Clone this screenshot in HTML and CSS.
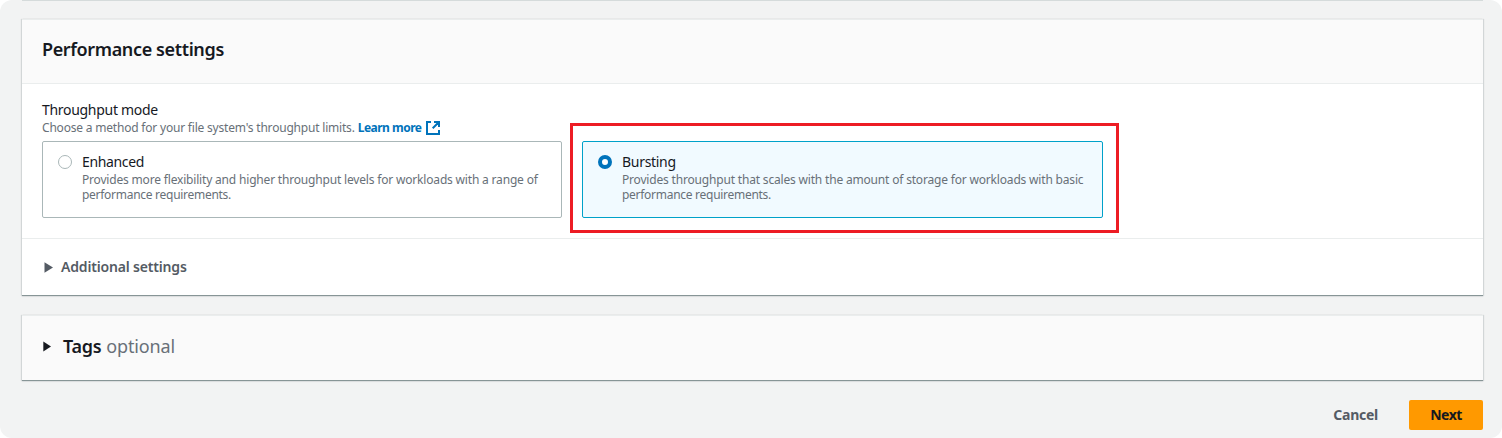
FILE: index.html
```html
<!DOCTYPE html>
<html lang="en">
<head>
<meta charset="utf-8">
<title>Performance settings</title>
<link rel="stylesheet" href="styles.css">
</head>
<body>
<main class="page">
  <div class="previous-edge"></div>
  <section class="card performance">
    <header class="card-header"><h2 class="title"><span class="t-title">Performance settings</span></h2></header>
    <div class="card-body">
      <div class="label"><span class="t-label">Throughput mode</span></div>
      <div class="hint">
        <span class="t-hint">Choose a method for your file system's throughput limits.</span>
        <a class="learn" href="#"><span class="t-learn">Learn more</span>
          <svg class="external" viewBox="0 0 14 14"><path d="M5 1H1v12h12V9M8 1h5v5M13 1L6.7 7.3"/></svg>
        </a>
      </div>
      <div class="options">
        <label class="option">
          <span class="radio"></span>
          <span class="option-text">
            <span class="option-name"><span class="t-enhanced">Enhanced</span></span>
            <span class="description"><span class="t-long">Provides more flexibility and higher throughput levels for workloads with a range of</span></span>
            <span class="description"><span class="t-short">performance requirements.</span></span>
          </span>
        </label>
        <label class="option selected">
          <span class="radio checked"></span>
          <span class="option-text">
            <span class="option-name"><span class="t-bursting">Bursting</span></span>
            <span class="description"><span class="t-long">Provides throughput that scales with the amount of storage for workloads with basic</span></span>
            <span class="description"><span class="t-short">performance requirements.</span></span>
          </span>
          <span class="highlight"></span>
        </label>
      </div>
    </div>
    <div class="additional">
      <svg class="caret" viewBox="0 0 9 11"><path d="M.5.3v10.4L9 5.5z"/></svg>
      <span class="t-additional">Additional settings</span>
    </div>
  </section>
  <section class="card tags">
    <svg class="caret" viewBox="0 0 9 11"><path d="M1.3.5v10L9 5.5z"/></svg>
    <h2 class="title tags-title"><span class="t-tags">Tags</span> <span class="optional">optional</span></h2>
  </section>
  <footer class="actions">
    <button class="button cancel"><span class="t-cancel">Cancel</span></button>
    <button class="button next"><span class="t-next">Next</span></button>
  </footer>
</main>
</body>
</html>
```
FILE: styles.css
```css
* { box-sizing: border-box; }
body { margin: 0; background: #fff; font-family: "Noto Sans", sans-serif; color: #16191f; }
.page { width: 1502px; height: 438px; padding: 0 18px 0 22px; background: #f2f3f3; border-radius: 12px; overflow: hidden; }
.previous-edge { width: 1461px; height: 1px; background: #d5dbdb; margin-bottom: 19px; }
.card { width: 1461px; background: #fff; box-shadow: 0 1px 1px 0 rgba(0,28,36,.05), 1px 0 1px 0 rgba(0,28,36,.12), -1px 0 1px 0 rgba(0,28,36,.12); border-top: 1px solid #eaeded; border-bottom: 1px solid #879596; }
.performance { height: 277px; margin-top: -1px; }
.card-header { height: 64px; padding: 16px 20px 0; background: #fafafa; border-bottom: 1px solid #eaeded; }
.title { margin: 0; font-size: 18px; line-height: 26px; font-weight: 600; white-space: nowrap; }
.card-body { height: 155px; padding: 16px 20px 0; border-bottom: 1px solid #eaeded; }
.label { font-size: 14px; line-height: 20px; white-space: nowrap; }
.hint { display: flex; height: 16px; margin-bottom: 5px; color: #687078; font-size: 12px; line-height: 16px; white-space: nowrap; gap: 3px; }
.learn { display: flex; align-items: center; gap: 4px; color: #0073bb; font-weight: 700; text-decoration: none; }
.external { width: 14px; height: 14px; fill: none; stroke: #0073bb; stroke-width: 2; }
.options { display: flex; gap: 20px; }
.option { position: relative; display: flex; width: 520px; height: 77px; padding: 10px 14px; gap: 10px; border: 1px solid #aab7b8; border-radius: 2px; }
.selected { width: 521px; border-color: #00a1c9; background: #f1faff; }
.radio { flex: none; width: 14px; height: 14px; margin: 3px 0 0 1px; border: 1px solid #aab7b8; border-radius: 50%; background: #fff; }
.checked { border: 4px solid #0073bb; }
.option-text { display: flex; flex-direction: column; white-space: nowrap; }
.option-name { font-size: 14px; line-height: 20px; }
.description { font-size: 12px; line-height: 15px; color: #687078; }
.highlight { position: absolute; left: -13px; top: -19px; width: 549px; height: 110px; border: 3px solid #ed1c24; }
.additional { display: flex; align-items: center; gap: 8px; padding: 0 0 0 22px; height: 56px; color: #545b64; font-size: 14px; line-height: 20px; font-weight: 600; }
.caret { flex: none; width: 9px; height: 11px; fill: currentColor; }
.tags { display: flex; align-items: center; gap: 12px; height: 66px; margin-top: 19px; padding: 0 20px 4px; background: #fafafa; }
.tags-title { display: flex; gap: 5px; }
.optional { color: #687078; font-weight: 400; letter-spacing: -.15px; }
.actions { display: flex; justify-content: flex-end; align-items: center; gap: 31px; padding: 19px 1px 0 0; }
.button { border: 0; padding: 0; height: 30px; background: none; font: 700 14px/30px "Noto Sans", sans-serif; }
.cancel { color: #545b64; }
.next { width: 74px; background: #ff9900; border-radius: 2px; color: #16191f; }
.t-title { letter-spacing: -.37px; }
.t-label { letter-spacing: -.3px; }
.t-hint { letter-spacing: -.2px; }
.t-learn { letter-spacing: -.5px; }
.t-enhanced { letter-spacing: -.35px; }
.t-bursting { letter-spacing: -.3px; }
.t-long { letter-spacing: -.18px; }
.t-short { letter-spacing: -.28px; }
.t-additional { letter-spacing: -.17px; }
.t-tags { letter-spacing: -.3px; }
.t-cancel { letter-spacing: -.25px; }
.t-next { letter-spacing: -.5px; }
```
